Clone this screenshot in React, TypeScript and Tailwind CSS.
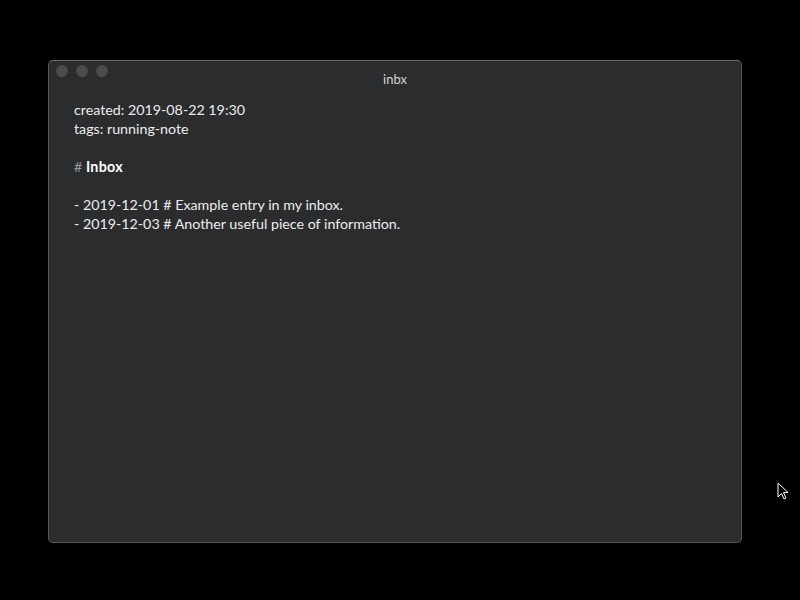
import React from "react";

export default function App() {
  const font = { fontFamily: "Lato, 'Noto Sans', sans-serif" };
  return (
    <div className="relative w-[800px] h-[600px] bg-black overflow-hidden" style={font}>
      <div className="absolute left-[48px] top-[60px] w-[694px] h-[483px] rounded-[5px] bg-[#2b2c2e] border border-[#555658] border-t-[#6a6b6d] flex flex-col">
        <div className="relative h-[30px] flex items-center justify-center">
          <div className="absolute left-[7px] top-[4px] flex gap-[8px]">
            <span className="w-[12px] h-[12px] rounded-full bg-[#4b4c4e]" />
            <span className="w-[12px] h-[12px] rounded-full bg-[#4b4c4e]" />
            <span className="w-[12px] h-[12px] rounded-full bg-[#4b4c4e]" />
          </div>
          <span className="text-[13px] text-[#d4d4d4] mt-[8px]">inbx</span>
        </div>
        <div className="pl-[25px] pt-[9px] text-[14.25px] leading-[19px] text-[#ececec]">
          <div>created: 2019-08-22 19:30</div>
          <div>tags: running-note</div>
          <div>&nbsp;</div>
          <div>
            <span className="text-[#9a9b9c]">#</span> <span className="font-bold text-white tracking-[0.3px]">Inbox</span>
          </div>
          <div>&nbsp;</div>
          <div>- 2019-12-01 # Example entry in my inbox.</div>
          <div>- 2019-12-03 # Another useful piece of information.</div>
        </div>
      </div>
      <svg className="absolute left-[777px] top-[482px]" width="12" height="19" viewBox="0 0 12 19">
        <path d="M1 1 L1 15 L4.5 11.5 L7 17 L9 16 L6.5 10.5 L11 10.5 Z" fill="black" stroke="white" strokeWidth="1" />
      </svg>
    </div>
  );
}
